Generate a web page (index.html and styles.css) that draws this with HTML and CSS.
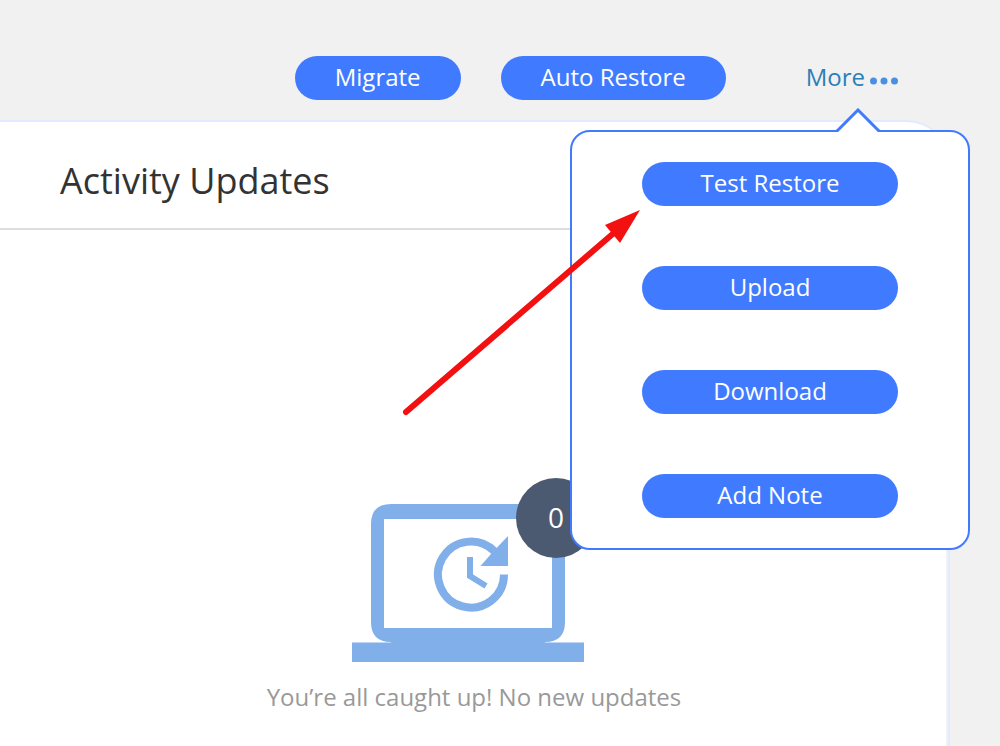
FILE: index.html
```html
<!DOCTYPE html>
<html lang="en">
<head>
    <meta charset="UTF-8">
    <meta name="viewport" content="width=device-width, initial-scale=1.0">
    <title>Activity Updates</title>
    <link rel="stylesheet" href="styles.css">
</head>
<body>
    <header class="toolbar">
        <button class="btn">Migrate</button>
        <button class="btn">Auto Restore</button>
        <div class="more">
            <button class="more-toggle" aria-expanded="true">
                More
                <svg width="28" height="8" viewBox="0 0 28 8" fill="#4a90e2">
                    <circle cx="3.5" cy="4" r="3.5"/>
                    <circle cx="14" cy="4" r="3.5"/>
                    <circle cx="24.5" cy="4" r="3.5"/>
                </svg>
            </button>
            <div class="menu">
                <svg class="menu-caret" width="44" height="24" viewBox="0 0 44 24">
                    <path d="M0 24L22 2L44 24z" fill="#fff"/>
                    <path d="M0 23H1L22 2L43 23H44" fill="none" stroke="#407bff" stroke-width="3"/>
                </svg>
                <button class="btn">Test Restore</button>
                <button class="btn">Upload</button>
                <button class="btn">Download</button>
                <button class="btn">Add Note</button>
                <!-- Pointer to the first action -->
                <svg class="arrow" width="238" height="206" viewBox="0 0 238 206">
                    <path d="M4 202L213 22" stroke="#f31010" stroke-width="6" stroke-linecap="round"/>
                    <path d="M238 0L203 15L218 33z" fill="#f31010"/>
                </svg>
            </div>
        </div>
    </header>

    <main class="card">
        <h1 class="card-title">Activity Updates</h1>
        <div class="empty">
            <div class="illustration">
                <svg width="232" height="158" viewBox="0 0 232 158">
                    <!-- Laptop -->
                    <path d="M39 0H193Q213 0 213 20V118Q213 138 193 138H39Q19 138 19 118V20Q19 0 39 0zM32 15V124H200V15z" fill="#80afea" fill-rule="evenodd"/>
                    <path d="M0 138.500H232V158H0z" fill="#80afea"/>
                    <path d="M39 137H193V140H39z" fill="#80afea"/>
                    <!-- Clock -->
                    <path d="M142.300 47.200A33 33 0 1 0 152 70.500" fill="none" stroke="#80afea" stroke-width="8"/>
                    <path d="M156 32V62H128.500L139 50L145 43.500z" fill="#80afea"/>
                    <path d="M118 53V72L134 82" fill="none" stroke="#80afea" stroke-width="6"/>
                </svg>
                <span class="badge">0</span>
            </div>
            <p class="empty-text">You’re all caught up! No new updates</p>
        </div>
    </main>
</body>
</html>
```
FILE: styles.css
```css
:root {
    --blue: #407bff;
    --bg: #f1f1f1;
    --line: #e0ebff;
}

* {
    margin: 0;
    padding: 0;
    box-sizing: border-box;
}

body {
    display: flex;
    flex-direction: column;
    min-height: 100vh;
    overflow-x: hidden;
    background-color: var(--bg);
    font-family: "Open Sans", sans-serif;
    font-size: 24px;
}

button {
    border: none;
    font: inherit;
    cursor: pointer;
}

.toolbar {
    display: flex;
    justify-content: flex-end;
    gap: 40px;
    padding: 56px 102px 20px 40px;
}

.btn {
    height: 44px;
    padding: 0 40px 2px;
    border-radius: 22px;
    background-color: var(--blue);
    color: #fff;
    line-height: 42px;
    white-space: nowrap;
}

.more {
    position: relative;
    margin-left: 40px;
}

.more-toggle {
    display: flex;
    align-items: center;
    gap: 5px;
    height: 44px;
    padding-bottom: 2px;
    background: none;
    color: #2980b9;
    line-height: 42px;
}

.more-toggle svg {
    margin-top: 8px;
}

.menu {
    position: absolute;
    top: 74px;
    right: -72px;
    z-index: 1;
    display: flex;
    flex-direction: column;
    gap: 60px;
    width: 400px;
    padding: 30px 70px;
    border: 2px solid var(--blue);
    border-radius: 20px;
    background-color: #fff;
}

.menu-caret {
    position: absolute;
    top: -24px;
    right: 88px;
}

.arrow {
    position: absolute;
    top: 78px;
    right: 328px;
    pointer-events: none;
}

.card {
    flex: 1;
    margin-right: 50px;
    border-top: 2px solid var(--line);
    border-top-right-radius: 44px;
    /* white panel with a thin double edge on the right */
    background: linear-gradient(to left, var(--line) 2px, var(--bg) 2px, var(--bg) 4px, #fff 4px);
}

.card-title {
    padding: 35px 60px 23px;
    border-bottom: 2px solid #ddd;
    color: #333;
    font-size: 36px;
    font-weight: 400;
    line-height: 48px;
}

.empty {
    display: flex;
    flex-direction: column;
    align-items: center;
    gap: 20px;
    padding: 248px 2px 30px 0;
}

.illustration {
    position: relative;
    width: 244px;
    padding-top: 26px;
}

.illustration svg {
    display: block;
}

.badge {
    position: absolute;
    top: 0;
    right: 0;
    width: 80px;
    height: 80px;
    border-radius: 50%;
    background-color: #4c5a71;
    color: #fff;
    font-size: 28px;
    line-height: 78px;
    text-align: center;
}

.empty-text {
    color: #999;
    line-height: 30px;
}
```
